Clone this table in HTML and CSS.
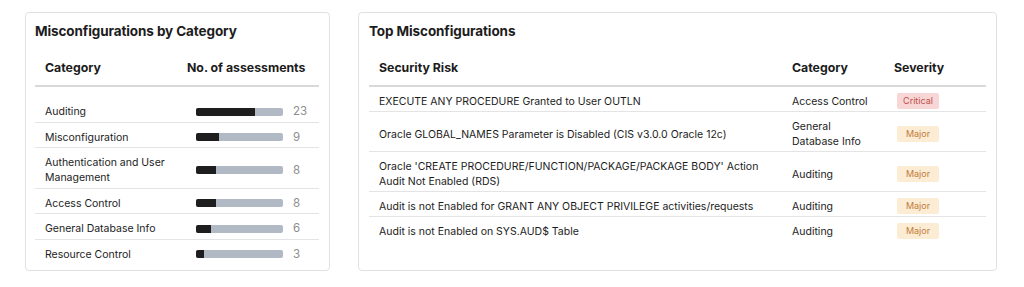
FILE: index.html
```html
<!DOCTYPE html>
<html lang="en">
<head>
    <meta charset="UTF-8">
    <meta name="viewport" content="width=device-width, initial-scale=1.0">
    <title>Misconfigurations</title>
    <link rel="stylesheet" href="styles.css">
</head>
<body>
    <div class="dashboard">
        <div class="card card-category">
            <h2>Misconfigurations by Category</h2>
            <table class="cat-table">
                <thead>
                    <tr><th class="col-name">Category</th><th class="col-count">No. of assessments</th></tr>
                </thead>
                <tbody>
                    <tr><td>Auditing</td><td><div class="bar-cell"><div class="bar"><div class="fill" style="width: 67.6%"></div></div><span class="num">23</span></div></td></tr>
                    <tr><td>Misconfiguration</td><td><div class="bar-cell"><div class="bar"><div class="fill" style="width: 26.5%"></div></div><span class="num">9</span></div></td></tr>
                    <tr><td>Authentication and User<br>Management</td><td><div class="bar-cell"><div class="bar"><div class="fill" style="width: 23.5%"></div></div><span class="num">8</span></div></td></tr>
                    <tr><td>Access Control</td><td><div class="bar-cell"><div class="bar"><div class="fill" style="width: 23.5%"></div></div><span class="num">8</span></div></td></tr>
                    <tr><td>General Database Info</td><td><div class="bar-cell"><div class="bar"><div class="fill" style="width: 17.6%"></div></div><span class="num">6</span></div></td></tr>
                    <tr><td>Resource Control</td><td><div class="bar-cell"><div class="bar"><div class="fill" style="width: 8.8%"></div></div><span class="num">3</span></div></td></tr>
                </tbody>
            </table>
        </div>

        <div class="card card-top">
            <h2>Top Misconfigurations</h2>
            <table class="risk-table">
                <thead>
                    <tr><th class="col-risk">Security Risk</th><th class="col-cat">Category</th><th class="col-sev">Severity</th></tr>
                </thead>
                <tbody>
                    <tr><td>EXECUTE ANY PROCEDURE Granted to User OUTLN</td><td>Access Control</td><td><span class="badge critical">Critical</span></td></tr>
                    <tr><td>Oracle GLOBAL_NAMES Parameter is Disabled (CIS v3.0.0 Oracle 12c)</td><td>General<br>Database Info</td><td><span class="badge major">Major</span></td></tr>
                    <tr><td>Oracle 'CREATE PROCEDURE/FUNCTION/PACKAGE/PACKAGE BODY' Action<br>Audit Not Enabled (RDS)</td><td>Auditing</td><td><span class="badge major">Major</span></td></tr>
                    <tr><td>Audit is not Enabled for GRANT ANY OBJECT PRIVILEGE activities/requests</td><td>Auditing</td><td><span class="badge major">Major</span></td></tr>
                    <tr><td>Audit is not Enabled on SYS.AUD$ Table</td><td>Auditing</td><td><span class="badge major">Major</span></td></tr>
                </tbody>
            </table>
        </div>
    </div>
</body>
</html>
```

FILE: styles.css
```css
body { margin: 0; font-family: Inter, "Liberation Sans", sans-serif; color: #1c1c1c; background: #fff; }
.dashboard { display: flex; gap: 28px; padding: 12px 0 0 25px; align-items: flex-start; }
.card { border: 1px solid #e1e1e1; border-radius: 4px; height: 257px; padding: 0 10px 0 9px; box-sizing: content-box; }
.card-category { width: 284px; }
.card-top { width: 617px; padding-left: 10px; }
.card h2 { margin: 0; padding-top: 8px; font-size: 13.5px; line-height: 20px; font-weight: 700; letter-spacing: -0.1px; }

table { border-collapse: collapse; margin-top: 10px; font-size: 10.5px; }
th { text-align: left; font-size: 12.3px; font-weight: 700; line-height: 18px; padding: 8px 10px 8px; border-bottom: 2px solid #d9d9d9; }
td { line-height: 15px; padding: 7px 10px 2px; border-bottom: 1px solid #e4e4e4; vertical-align: middle; }
tbody tr:last-child td { border-bottom: none; }

.cat-table { width: 284px; }
.cat-table td { padding-bottom: 2.5px; }
.cat-table .col-name { width: 130px; }
.cat-table .col-count { padding-left: 2px; padding-right: 0; }
.cat-table tbody tr:first-child td { padding-top: 17px; }
.cat-table td:last-child { padding-left: 11px; padding-right: 0; }
.bar-cell { display: flex; align-items: center; gap: 10px; }
.bar { width: 87px; height: 8px; background: #b1bac4; border-radius: 2px; overflow: hidden; }
.fill { height: 100%; background: #1e1e1e; }
.num { color: #8c8c8c; font-size: 11.5px; }

.risk-table { width: 617px; }
.col-risk { width: 393px; }
.col-cat { width: 82px; }
.badge { display: block; margin: -1px 0 0 3px; width: 42px; height: 16px; line-height: 16px; text-align: center; font-size: 9px; border-radius: 2px; }
.critical { background: #f8d6d5; color: #b9504b; }
.major { background: #fcecd3; color: #c07b3c; }
```
